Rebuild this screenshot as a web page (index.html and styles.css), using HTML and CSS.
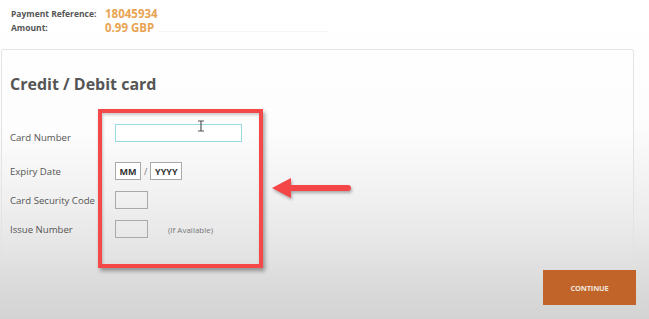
FILE: index.html
```html
<!DOCTYPE html>
<html>
<head>
<meta charset="utf-8">
<link rel="stylesheet" href="styles.css">
</head>
<body>
<div class="page">
  <div class="summary">
    <div class="sum-row"><span class="sum-label">Payment Reference:</span><span class="sum-value">18045934</span></div>
    <div class="sum-row"><span class="sum-label">Amount:</span><span class="sum-value">0.99 GBP</span><span class="sum-line"></span></div>
  </div>

  <div class="card">
    <h1 class="card-title">Credit / Debit card</h1>
    <div class="form">
      <div class="row row-first">
        <label class="lbl">Card Number</label>
        <div class="field"><span class="input input-long input-focus"></span></div>
      </div>
      <div class="row">
        <label class="lbl">Expiry Date</label>
        <div class="field"><span class="input input-mm">MM</span><span class="slash">/</span><span class="input input-yy">YYYY</span></div>
      </div>
      <div class="row">
        <label class="lbl">Card Security Code</label>
        <div class="field"><span class="input input-short"></span></div>
      </div>
      <div class="row">
        <label class="lbl">Issue Number</label>
        <div class="field"><span class="input input-short"></span><span class="hint">(If Available)</span></div>
      </div>
    </div>
  </div>

  <div class="actions">
    <button class="btn">CONTINUE</button>
  </div>

  <div class="highlight"></div>
  <svg class="arrow" width="84" height="26" viewBox="0 0 84 26">
    <path d="M2 12 L21 2 L21 9 L78 9 Q81 9 81 12 Q81 15 78 15 L21 15 L21 22 Z" fill="#f44646"/>
  </svg>
  <svg class="ibeam" width="8" height="12" viewBox="0 0 8 12">
    <path d="M1 1 H7 M4 1 V11 M1 11 H7" stroke="#555" stroke-width="1.2" fill="none"/>
  </svg>
</div>
</body>
</html>
```
FILE: styles.css
```css
html, body {
  margin: 0;
  padding: 0;
}
body {
  width: 649px;
  height: 319px;
  overflow: hidden;
  font-family: "Open Sans", "Liberation Sans", sans-serif;
  color: #555;
  background: linear-gradient(180deg, #ffffff 0px, #fdfdfd 120px, #ececec 220px, #dcdcdc 280px, #d3d3d3 319px);
}
.page {
  position: relative;
  height: 319px;
}
.summary {
  padding: 6px 0 0 11px;
  height: 43px;
  box-sizing: border-box;
}
.sum-row {
  display: flex;
  align-items: center;
  height: 14px;
}
.sum-label {
  width: 94px;
  font-size: 8.5px;
  font-weight: 700;
  color: #555;
}
.sum-value {
  font-size: 11.5px;
  font-weight: 700;
  color: #e8a452;
}
.sum-line {
  width: 170px;
  margin-left: 4px;
  margin-top: 8px;
  border-top: 1px solid #f6f6f6;
}
.card {
  margin: 6px 15px 0 1px;
  height: 211px;
  border: 1px solid #e3e3e3;
  border-radius: 2px;
  background: linear-gradient(180deg, #fefefe 0, #fdfdfd 80px, #f0f0f0 150px, #e2e2e2 211px);
  box-sizing: border-box;
  padding: 22px 0 0 8px;
}
.card-title {
  margin: 0;
  font-size: 16px;
  font-weight: 700;
  color: #555;
  line-height: 24px;
}
.form {
  margin-top: 28px;
}
.row {
  display: flex;
  align-items: center;
  height: 18px;
  margin-top: 11px;
}
.row-first {
  margin-top: 0;
  margin-bottom: 20px;
}
.row-first .lbl {
  padding-top: 8px;
}
.lbl {
  width: 105px;
  font-size: 9.6px;
  color: #555;
}
.field {
  display: flex;
  align-items: center;
}
.input {
  display: inline-flex;
  align-items: center;
  justify-content: center;
  box-sizing: border-box;
  height: 18px;
  border: 1px solid #a9a9a9;
  background: #fff;
  font-size: 9px;
  font-weight: 700;
  color: #333;
}
.input-long {
  width: 127px;
}
.input-focus {
  border-color: #96dbe0;
}
.input-mm {
  width: 26px;
}
.input-yy {
  width: 32px;
}
.input-short {
  width: 33px;
  background: transparent;
}
.slash {
  font-size: 9px;
  color: #777;
  margin: 0 3px 0 3px;
}
.hint {
  margin-left: 20px;
  font-size: 8px;
  color: #777;
}
.actions {
  display: flex;
  justify-content: flex-end;
  padding: 10px 13px 0 0;
}
.btn {
  width: 93px;
  height: 35px;
  border: 0;
  background: #c0642a;
  color: #f1e4da;
  font-family: "Open Sans", "Liberation Sans", sans-serif;
  font-size: 7.5px;
  font-weight: 700;
  letter-spacing: -0.2px;
  padding: 0;
}
.highlight {
  position: absolute;
  left: 98px;
  top: 109px;
  width: 165px;
  height: 159px;
  box-sizing: border-box;
  border: 4px solid #f54848;
  box-shadow: 2px 3px 4px rgba(0, 0, 0, 0.35), inset 1px 2px 3px rgba(0, 0, 0, 0.2);
}
.arrow {
  position: absolute;
  left: 270px;
  top: 176px;
  filter: drop-shadow(1px 2px 1.5px rgba(0, 0, 0, 0.3));
}
.ibeam {
  position: absolute;
  left: 197px;
  top: 120px;
}
```
